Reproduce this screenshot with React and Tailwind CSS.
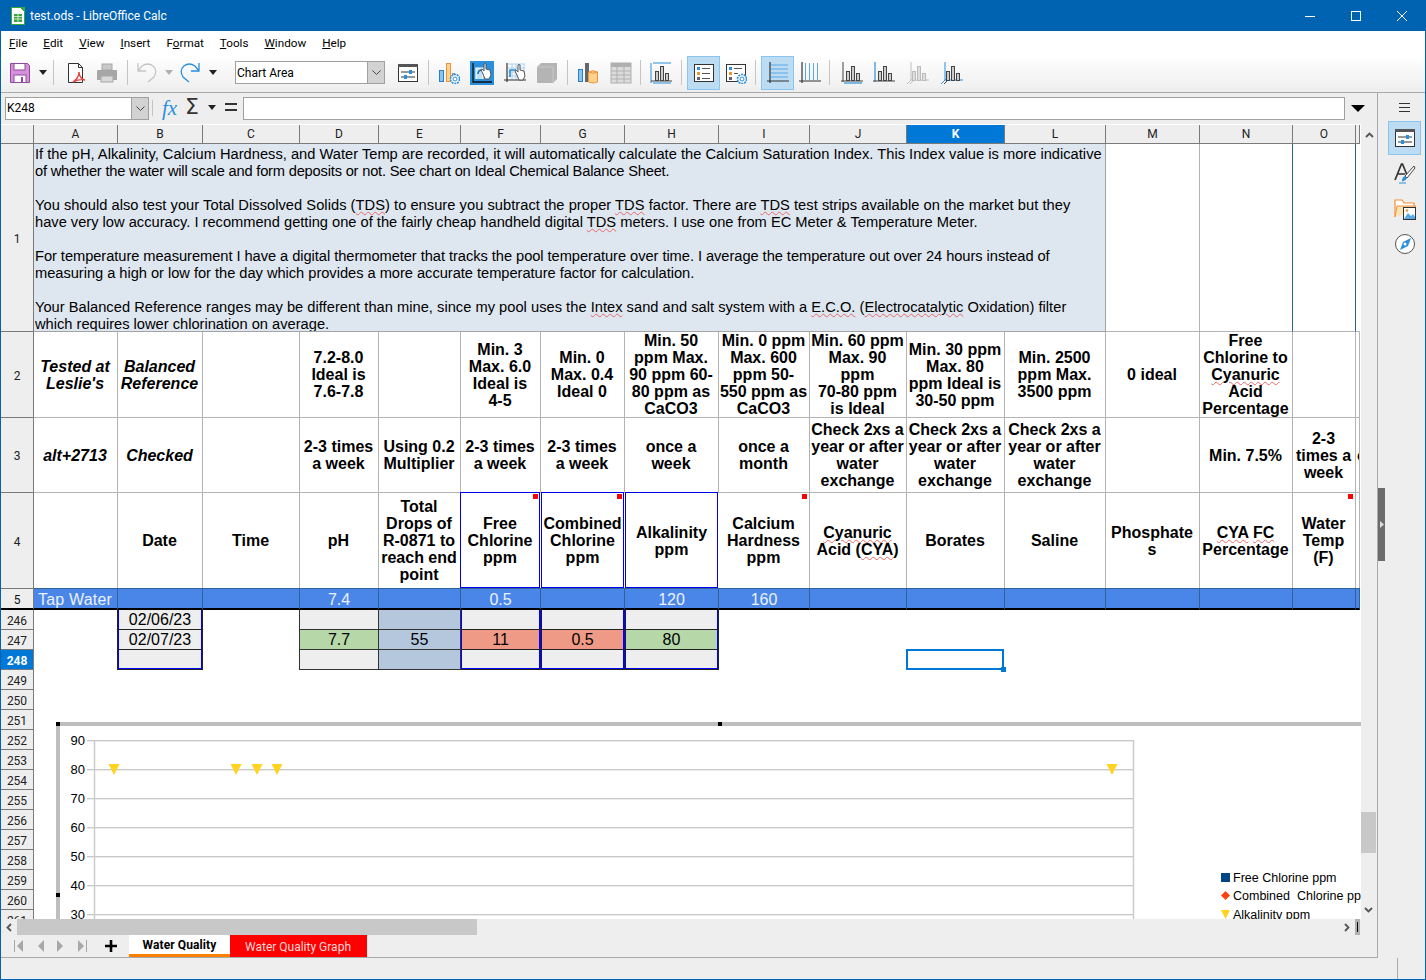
import * as React from "react";

// --- toolbar icons, all on a 22 box ---
const Ico = ({ children, w = 22, h = 22, className = "" }) => (
    <svg width={w} height={h} viewBox={`0 0 ${w} ${h}`} className={`shrink-0 ${className}`} fill="none">
        {children}
    </svg>
);

const Sep = ({ className = "", h = "h-[25px]" }) => <div className={`w-px ${h} bg-[#c4c4c4] shrink-0 ${className}`} />;

const Caret = ({ className = "", color = "#222" }) => (
    <svg width="10" height="6" viewBox="0 0 10 6" className={`shrink-0 ${className}`}>
        <path d="M1 0h8L5 5z" fill={color} />
    </svg>
);

const SaveIcon = () => (
    <Ico>
        <path d="M1.5 1.5h17l2 2v17h-19z" fill="#d691d8" stroke="#8e4aa3" />
        <rect x="5" y="1.5" width="11" height="6.5" fill="#fff" stroke="#8e4aa3" />
        <rect x="5" y="13" width="12" height="7.5" fill="#fff" stroke="#8e4aa3" />
        <rect x="12" y="15" width="2" height="5" fill="#8e4aa3" />
    </Ico>
);

const PdfIcon = () => (
    <Ico>
        <path d="M3.5 1.5h10l4 4v15h-14z" fill="#fff" stroke="#333" />
        <path d="M13.5 1.5v4h4" stroke="#333" />
        <path d="M14 10c0 4-3 8-6 10 4-2 8-3 12-2-3 0-6-4-6-8z" stroke="#e2433f" strokeWidth="1.4" fill="#fff" />
    </Ico>
);

const PrintIcon = () => (
    <Ico>
        <rect x="6" y="2" width="10" height="6" fill="#c8c8c8" stroke="#a8a8a8" />
        <path d="M1 9q0-1 1-1h18q1 0 1 1v9H1z" fill="#a6a6a6" />
        <rect x="5" y="14" width="12" height="6" fill="#d8d8d8" stroke="#a8a8a8" />
    </Ico>
);

const UndoIcon = () => (
    <Ico>
        <path d="M2 1v8h8M2 9l4-5q6-4 11 0t1 11l-6 5" stroke="#c4c4c4" strokeWidth="1.3" />
    </Ico>
);

const RedoIcon = () => (
    <Ico>
        <path d="M19 1v8h-8M19 9l-4-5Q9 0 4 4T3 15l6 5" stroke="#2a8fdc" strokeWidth="1.3" />
    </Ico>
);

const PropsIcon = () => (
    <Ico>
        <rect x="1.5" y="2.5" width="19" height="17" fill="#fff" stroke="#333" />
        <rect x="1" y="2" width="20" height="3" fill="#555" />
        <path d="M4 10h14M4 15h14" stroke="#333" />
        <rect x="12" y="8" width="3" height="4" fill="#2a8fdc" />
        <rect x="7" y="13" width="3" height="4" fill="#2a8fdc" />
    </Ico>
);

const Gear = ({ x, y }) => (
    <g>
        <circle cx={x} cy={y} r="4.5" stroke="#2a8fdc" strokeWidth="1.6" strokeDasharray="2 .8" fill="#fff" />
        <circle cx={x} cy={y} r="2" stroke="#2a8fdc" />
    </g>
);

const BarsGearIcon = () => (
    <Ico>
        <rect x="1.5" y="8.5" width="4" height="11" fill="#8cc4f0" stroke="#2a7fc8" />
        <rect x="8.5" y="1.5" width="4" height="18" fill="#fbd38d" stroke="#f0923a" />
        <path d="M14 12h3" stroke="#333" />
        <Gear x={17} y={17} />
    </Ico>
);

const HandBadge = () => (
    <path d="M13 13l-2-4q0-1 1-1l2 2V3q1-1 2 0v5l4 1 1 5-2 4h-4z" fill="#fff" stroke="#555" />
);

const TitleHandIcon = () => (
    <div className="w-[24px] h-[24px] bg-[#2a8fdc] shrink-0">
        <Ico w={24} h={24}>
            <path d="M3 2v19h19" stroke="#111" strokeWidth="1.3" />
            <path d="M6 18V7h7v11" fill="#bfe0f8" stroke="#fff" strokeWidth="1.200" />
            <path d="M8 13q0-4 4-4" stroke="#1b6fb5" strokeWidth="1.600" />
            <HandBadge />
        </Ico>
    </div>
);

const GridHandIcon = () => (
    <Ico>
        <path d="M4 2h17M4 6h17M4 10h17M4 14h17M8 2v16M12 2v16M16 2v16M20 2v16" stroke="#a8d3f4" />
        <path d="M3 1v19M0 18h22" stroke="#333" strokeWidth="1.2" />
        <path d="M6 15V8h6" stroke="#2a8fdc" strokeWidth="1.6" />
        <HandBadge />
    </Ico>
);

const CubeIcon = () => (
    <Ico>
        <path d="M1 21V5l4-4h16v16l-4 4z" fill="#b4b4b4" />
        <path d="M1 5h16v16" stroke="#c8c8c8" />
    </Ico>
);

const DbIcon = () => (
    <Ico>
        <rect x="1.5" y="7.5" width="4" height="12" fill="#8cc4f0" stroke="#2a7fc8" />
        <rect x="8" y="1" width="4" height="19" fill="#666" />
        <path d="M11.5 10q4.5-2.500 9 0v10q-4.500 2-9 0z" fill="#fbd38d" stroke="#f0923a" />
        <path d="M11.500 10q4.500 2.500 9 0" stroke="#f0923a" />
    </Ico>
);

const TableIcon = () => (
    <Ico>
        <rect x="1" y="1" width="20" height="20" fill="#dcdcdc" />
        <rect x="1" y="1" width="20" height="4" fill="#b0b0b0" />
        <path d="M1 9h20M1 13h20M1 17h20M7 1v20M14 1v20" stroke="#b0b0b0" />
        <rect x="1" y="1" width="20" height="20" stroke="#b0b0b0" />
    </Ico>
);

const Bars = ({ c = "#444", f = "#ccc" }) => (
    <g stroke={c} fill={f}>
        <rect x="5.500" y="9.500" width="3" height="9" />
        <rect x="10.500" y="4.500" width="3" height="14" />
        <rect x="15.500" y="11.500" width="3" height="7" />
    </g>
);

const ChartTitleIcon = () => (
    <Ico>
        <path d="M1 1v20" stroke="#2a8fdc" />
        <path d="M3 1h18M3 21h18" stroke="#2a8fdc" />
        <path d="M1 19h21" stroke="#444" />
        <Bars />
    </Ico>
);

const LegendIcon = () => (
    <Ico>
        <rect x="1.500" y="2.500" width="19" height="17" fill="#fff" stroke="#333" />
        <rect x="4" y="5" width="3" height="3" fill="#2a8fdc" />
        <rect x="4" y="10" width="3" height="3" fill="#f0923a" />
        <rect x="4" y="15" width="3" height="3" fill="#666" />
        <path d="M9 6.500h8M9 11.500h8M9 16.500h8" stroke="#555" />
    </Ico>
);

const LegendGearIcon = () => (
    <Ico>
        <rect x="1.500" y="2.500" width="19" height="17" fill="#fff" stroke="#333" />
        <rect x="4" y="5" width="3" height="3" fill="#2a8fdc" />
        <rect x="4" y="10" width="3" height="3" fill="#f0923a" />
        <rect x="4" y="15" width="3" height="3" fill="#666" />
        <path d="M9 6.500h8M9 11.500h4" stroke="#555" />
        <Gear x={17} y={17} />
    </Ico>
);

const HGridIcon = () => (
    <Ico>
        <path d="M4 3h17M4 7h17M4 11h17M4 15h17" stroke="#5aa9e6" />
        <path d="M3 0v21M0 19h22" stroke="#333" strokeWidth="1.2" />
    </Ico>
);

const VGridIcon = () => (
    <Ico>
        <path d="M6.500 1v17M10.500 1v17M14.500 1v17M18.500 1v17" stroke="#5aa9e6" />
        <path d="M3 0v21M0 19h22" stroke="#333" strokeWidth="1.2" />
    </Ico>
);

const AxisXIcon = () => (
    <Ico>
        <path d="M2 0v20M0 19h22" stroke="#444" />
        <path d="M3 21h18" stroke="#2a8fdc" strokeWidth="1.2" />
        <Bars />
    </Ico>
);

const AxisYIcon = () => (
    <Ico>
        <path d="M2 0v20" stroke="#2a8fdc" strokeWidth="1.2" />
        <path d="M0 19h22" stroke="#444" />
        <Bars />
    </Ico>
);

const AxisZIcon = () => (
    <Ico>
        <path d="M4 0v18M4 18h18" stroke="#c0c0c0" />
        <path d="M0 22l6-6M3 22l6-6" stroke="#c0c0c0" />
        <Bars c="#bcbcbc" f="#dedede" />
    </Ico>
);

const AxisAllIcon = () => (
    <Ico>
        <path d="M4 0v18" stroke="#2a8fdc" />
        <path d="M4 18h18" stroke="#2a8fdc" />
        <path d="M0 22l6-6" stroke="#2a8fdc" />
        <path d="M3 22l6-6" stroke="#444" />
        <Bars />
    </Ico>
);

const StylesIcon = () => (
    <Ico>
        <path d="M1 17L7.500 1h1L13 12M4 11h7" stroke="#333" strokeWidth="1.7" />
        <path d="M20 3L11 13l2 2L21 5z" fill="#fff" stroke="#444" />
        <path d="M11 13q-3 1-3 5 3 1 5-3z" fill="#2a8fdc" />
        <path d="M5 20h7" stroke="#2a8fdc" />
    </Ico>
);

const GalleryIcon = () => (
    <Ico>
        <path d="M1 19V2h7l2 3h10v3" fill="#fff" stroke="#f0923a" strokeWidth="1.2" />
        <path d="M1 19l2-11h19l-1 4" fill="#fbe3b4" stroke="#f0923a" />
        <rect x="9.500" y="9.500" width="12" height="12" fill="#fff" stroke="#333" />
        <path d="M10 21l4-6 3 3 2-2 2 3v2z" fill="#5aa9e6" />
        <circle cx="13" cy="12.500" r="1.300" fill="#f0923a" />
    </Ico>
);

const NavigatorIcon = () => (
    <Ico>
        <circle cx="11" cy="11" r="9.500" fill="#fff" stroke="#555" />
        <path d="M17 5l-3 8-8 4 3-8z" fill="#2a8fdc" />
        <circle cx="11" cy="11" r="1.500" fill="#fff" />
    </Ico>
);

const Combo = ({ text, className = "" }) => (
    <div className={`flex border border-[#a0a0a0] bg-white shrink-0 ${className}`}>
        <div className="flex-1 flex items-center pl-[1px] text-[12px] text-black">{text}</div>
        <div className="w-[17px] bg-[#d2d2d2] border-l border-[#a0a0a0] flex items-center justify-center">
            <svg width="9" height="5" viewBox="0 0 9 5" fill="none">
                <path d="M.5.500l4 4 4-4" stroke="#444" />
            </svg>
        </div>
    </div>
);

// --- sheet data ---
const COLUMNS = ["A", "B", "C", "D", "E", "F", "G", "H", "I", "J", "K", "L", "M", "N", "O", "P"];

const INTRO = [
    ["If the pH, Alkalinity, Calcium Hardness, and Water Temp are recorded, it will automatically calculate the Calcium Saturation Index. This Index value is more indicative", "tracking-[0.01px]"],
    ["of whether the water will scale and form deposits or not. See chart on Ideal Chemical Balance Sheet.", "tracking-[-0.19px]"],
    ["", ""],
    ["You should also test your Total Dissolved Solids (~TDS~) to ensure you subtract the proper ~TDS~ factor. There are ~TDS~ test strips available on the market but they", "tracking-[0.04px]"],
    ["have very low accuracy. I recommend getting one of the fairly cheap handheld digital ~TDS~ meters. I use one from EC Meter & Temperature Meter.", ""],
    ["", ""],
    ["For temperature measurement I have a digital thermometer that tracks the pool temperature over time. I average the temperature out over 24 hours instead of", "tracking-[-0.05px]"],
    ["measuring a high or low for the day which provides a more accurate temperature factor for calculation.", "tracking-[-0.03px]"],
    ["", ""],
    ["Your Balanced Reference ranges may be different than mine, since my pool uses the ~Intex~ sand and salt system with a ~E.C.O.~ (~Electrocatalytic~ Oxidation) filter", "tracking-[0.02px]"],
    ["which requires lower chlorination on average.", ""],
];

const ROW2 = [
    "Tested at\nLeslie's", "Balanced\nReference", "", "7.2-8.0\nIdeal is\n7.6-7.8", "",
    "Min. 3\nMax. 6.0\nIdeal is\n4-5", "Min. 0\nMax. 0.4\nIdeal 0", "Min. 50\nppm Max.\n90 ppm 60-\n80 ppm as\nCaCO3",
    "Min. 0 ppm\nMax. 600\nppm 50-\n550 ppm as\nCaCO3", "Min. 60 ppm\nMax. 90\nppm\n70-80 ppm\nis Ideal",
    "Min. 30 ppm\nMax. 80\nppm Ideal is\n30-50 ppm", "Min. 2500\nppm Max.\n3500 ppm", "0 ideal",
    "Free\nChlorine to\n~Cyanuric~\nAcid\nPercentage", "", "",
];

const CHECK = "Check 2xs a\nyear or after\nwater\nexchange";
const ROW3 = [
    "alt+2713", "Checked", "", "2-3 times\na week", "Using 0.2\nMultiplier", "2-3 times\na week", "2-3 times\na week",
    "once a\nweek", "once a\nmonth", CHECK, CHECK, CHECK, "", "Min. 7.5%", "2-3\ntimes a\nweek", "once",
];

const ROW4 = [
    "", "Date", "Time", "pH", "Total\nDrops of\nR-0871 to\nreach end\npoint", "Free\nChlorine\nppm", "Combined\nChlorine\nppm",
    "Alkalinity\nppm", "Calcium\nHardness\nppm", "~Cyanuric~\nAcid (~CYA~)", "Borates", "Saline", "Phosphate\ns",
    "~CYA~ ~FC~\nPercentage", "Water\nTemp\n(F)", "",
];

const ROW5 = ["Tap Water", "", "", "7.4", "", "0.5", "", "120", "160", "", "", "", "", "", "", ""];

// ~word~ gets the red spell check line
const withSpell = (text) =>
    text.split("~").map((part, i) =>
        i % 2 ? (
            <span key={i} className="underline decoration-wavy decoration-[#e86a6a] decoration-1 underline-offset-[1px]">
                {part}
            </span>
        ) : (
            part
        )
    );

const RowHead = ({ n, active }) => (
    <div
        className={`flex items-center justify-center pt-[2px] border-b border-r border-[#7a7a7a] text-[12px] font-['Roboto',sans-serif] ${
            active ? "bg-[#0078d7] text-white font-bold" : "bg-[#eeeeee] text-[#222]"
        }`}
    >
        {n}
    </div>
);

const HeadCell = ({ text, className = "" }) => (
    <div
        className={`flex items-center justify-center text-center whitespace-pre-line overflow-hidden text-[16px] leading-[17px] font-bold text-black ${className}`}
    >
        <div>{withSpell(text)}</div>
    </div>
);

const PLAIN = "border-r border-b border-[#b4b4b4] pr-px";
// the three boxed header cells of the selected columns
const PICKED = {
    5: "border border-[#0000ee] -ml-px -mt-px mr-px mb-px pt-px",
    6: "border border-[#0000ee] -mt-px mr-px mb-px pt-px",
    7: "border border-[#0000ee] -mt-px mr-px mb-px pt-px",
};

const GRAY = "bg-[#eeeeee]";
const BLUE = "bg-[#b4c7dc]";
const GREEN = "bg-[#b6d7a8]";
const RED = "bg-[#ee9a86]";
const RANGE = "border-r border-b border-[#222] shadow-[inset_1px_0_0_#0000ff,inset_-1px_0_0_#0000ff]";
const RANGE_END = "border-r border-b border-[#222] shadow-[inset_1px_0_0_#0000ff,inset_-1px_0_0_#0000ff,inset_0_-1px_0_#0000ff]";
const LEFT_EDGE = "-ml-px border-l";
const SOLO = "-ml-px border-l border-r border-b border-[#333]";

const DataCell = ({ text = "", className = "" }) => (
    <div className={`flex items-center justify-center text-[16px] text-black ${className}`}>{text}</div>
);

const Empty = () => <div />;

const TableRows = () => (
    <>
        <RowHead n={246} />
        <Empty />
        <DataCell text="02/06/23" className={`${GRAY} ${RANGE} ${LEFT_EDGE}`} />
        <Empty />
        <DataCell className={`${GRAY} ${SOLO}`} />
        <DataCell className={`${BLUE} ${SOLO}`} />
        <DataCell className={`${GRAY} ${RANGE}`} />
        <DataCell className={`${GRAY} ${RANGE}`} />
        <DataCell className={`${GRAY} ${RANGE}`} />
        {Array.from({ length: 8 }).map((_, i) => <Empty key={i} />)}

        <RowHead n={247} />
        <Empty />
        <DataCell text="02/07/23" className={`${GRAY} ${RANGE} ${LEFT_EDGE}`} />
        <Empty />
        <DataCell text="7.7" className={`${GREEN} ${SOLO}`} />
        <DataCell text="55" className={`${BLUE} ${SOLO}`} />
        <DataCell text="11" className={`${RED} ${RANGE}`} />
        <DataCell text="0.5" className={`${RED} ${RANGE}`} />
        <DataCell text="80" className={`${GREEN} ${RANGE}`} />
        {Array.from({ length: 8 }).map((_, i) => <Empty key={i} />)}

        <RowHead n={248} active />
        <Empty />
        <DataCell className={`${GRAY} ${RANGE_END} ${LEFT_EDGE}`} />
        <Empty />
        <DataCell className={`${GRAY} ${SOLO}`} />
        <DataCell className={`${BLUE} ${SOLO}`} />
        <DataCell className={`${GRAY} ${RANGE_END}`} />
        <DataCell className={`${GRAY} ${RANGE_END}`} />
        <DataCell className={`${GRAY} ${RANGE_END}`} />
        <Empty />
        <Empty />
        {/* cursor on K248 */}
        <div className="relative">
            <div className="absolute -left-px -top-px right-px bottom-0 border-2 border-[#0078d7]" />
            <div className="absolute right-[-1px] bottom-[-2px] w-[5px] h-[5px] bg-[#0078d7]" />
        </div>
        {Array.from({ length: 5 }).map((_, i) => <Empty key={i} />)}

        {Array.from({ length: 13 }).map((_, r) => (
            <React.Fragment key={r}>
                <RowHead n={249 + r} />
                {COLUMNS.map((c) => <Empty key={c} />)}
            </React.Fragment>
        ))}
    </>
);

const Tri = ({ x }) => <path d={`M${x - 5.500} 764h11l-5.500 11z`} fill="#ffd320" />;

const Chart = () => (
    <div className="absolute left-[55px] top-[598px] w-[1305px] h-[197px] border-l-4 border-t-4 border-[#bebebe] bg-white">
        <div className="absolute -left-[4px] -top-[4px] w-[4px] h-[4px] bg-black" />
        <div className="absolute left-[658px] -top-[4px] w-[4px] h-[4px] bg-black" />
        <div className="absolute -left-[4px] top-[167px] w-[4px] h-[4px] bg-black" />
        <svg width="1301" height="193" viewBox="60 726 1301 193" className="block">
            {[740, 769, 798, 827, 856, 885, 914].map((y) => (
                <g key={y}>
                    <path d={`M87 ${y + 1.500}H1133`} stroke="#ececec" />
                    <path d={`M87 ${y + 0.500}H1133`} stroke="#c8c8c8" />
                </g>
            ))}
            <path d="M94.500 740V919M1133.500 740V919" stroke="#cccccc" strokeWidth="1.500" />
            {[90, 80, 70, 60, 50, 40, 30].map((v, i) => (
                <text key={v} x="85" y={745 + i * 29} textAnchor="end" fontSize="13" fontFamily="Liberation Sans" fill="#000">
                    {v}
                </text>
            ))}
            <Tri x={114} />
            <Tri x={236} />
            <Tri x={257} />
            <Tri x={277} />
            <Tri x={1112} />
            <rect x="1221" y="873" width="9" height="9" fill="#004586" />
            <path d="M1225.500 891l4.500 4.500-4.500 4.500-4.500-4.500z" fill="#ff420e" />
            <path d="M1221 910h9l-4.500 9z" fill="#ffd320" />
            <g fontSize="12.500" fontFamily="Liberation Sans" fill="#000">
                <text x="1233" y="882">Free Chlorine ppm</text>
                <text x="1233" y="900" xmlSpace="preserve">Combined  Chlorine ppm</text>
                <text x="1233" y="919">Alkalinity ppm</text>
            </g>
        </svg>
    </div>
);

const Sheet = () => (
    <div className="relative w-[1360px] h-[795px] overflow-hidden bg-white font-['Liberation_Sans',Arial,sans-serif]">
        <div className="grid grid-cols-[33px_84px_85px_97px_79px_82px_80px_84px_94px_91px_97px_98px_101px_94px_93px_63px_4px] grid-rows-[20px_188px_86px_75px_96px_21px_repeat(16,20px)]">
            {/* column letters */}
            <div className="bg-[#eeeeee] border-b border-r border-[#7a7a7a] mt-px" />
            {COLUMNS.map((c) => (
                <div
                    key={c}
                    className={`mt-px flex items-center justify-center border-b border-r border-[#7a7a7a] text-[12px] font-['Roboto',sans-serif] ${
                        c === "K" ? "bg-[#0078d7] text-white font-bold" : "bg-[#eeeeee] text-[#222]"
                    }`}
                >
                    {c !== "P" && c}
                </div>
            ))}

            {/* row 1, merged A to L */}
            <RowHead n={1} />
            <div className="col-span-12 bg-[#dee6ef] border-r border-b border-[#a4a4a4] pl-[1px] pt-[2px] overflow-hidden text-[14.67px] leading-[17px] text-black">
                {INTRO.map(([line, track], i) => (
                    <div key={i} className={`h-[17px] whitespace-nowrap ${track}`}>
                        {withSpell(line)}
                    </div>
                ))}
            </div>
            <div className="border-r border-b border-[#b4b4b4]" />
            <div className="border-r border-b border-r-[#2a6099] border-b-[#b4b4b4]" />
            <div className="border-r border-b border-r-[#2a6099] border-b-[#b4b4b4]" />
            <div className="border-b border-[#b4b4b4]" />

            {/* row 2 */}
            <RowHead n={2} />
            {ROW2.map((t, i) => (
                <HeadCell key={i} text={t} className={`${PLAIN} ${i < 2 ? "italic" : ""}`} />
            ))}

            {/* row 3 */}
            <RowHead n={3} />
            {ROW3.map((t, i) => (
                <HeadCell
                    key={i}
                    text={t}
                    className={`${PLAIN} ${i < 2 ? "italic" : ""} ${i === 15 ? "!justify-start pl-px" : ""}`}
                />
            ))}

            {/* row 4, the last fixed row */}
            <RowHead n={4} />
            {ROW4.map((t, i) => (
                <HeadCell key={i} text={t} className={PICKED[i] || PLAIN} />
            ))}

            {/* row 5 with the freeze line under it */}
            <div className="flex items-center justify-center pt-[2px] bg-[#eeeeee] border-r border-b-2 border-r-[#7a7a7a] border-b-black text-[12px] font-['Roboto',sans-serif]">
                5
            </div>
            {ROW5.map((t, i) => (
                <div
                    key={i}
                    className={`-mt-px flex items-center pt-[3px] border-r border-t border-b-2 border-r-[#2f6299] border-t-[#2f6299] border-b-black bg-[#4a86e8] text-[16px] text-[#eaf1fd] ${
                        i === 0 ? "pl-[4px] tracking-[0.2px]" : "justify-center"
                    }`}
                >
                    {t}
                </div>
            ))}

            <TableRows />
        </div>
        {/* comment marks */}
        <div className="absolute left-[532px] top-[370px] w-[5px] h-[5px] bg-[#ff0000]" />
        <div className="absolute left-[616px] top-[370px] w-[5px] h-[5px] bg-[#ff0000]" />
        <div className="absolute left-[801px] top-[370px] w-[5px] h-[5px] bg-[#ff0000]" />
        <div className="absolute left-[1347px] top-[370px] w-[5px] h-[5px] bg-[#ff0000]" />
        <Chart />
    </div>
);

const VScroll = () => (
    <div className="w-[16px] bg-[#eeeeee] relative">
        <div className="flex justify-center pt-[8px]">
            <svg width="9" height="6" viewBox="0 0 9 6" fill="none">
                <path d="M1 5l3.500-3.500L8 5" stroke="#555" strokeWidth="1.800" />
            </svg>
        </div>
        <div className="absolute left-0 top-[688px] w-[15px] h-[41px] bg-[#c8c8c8]" />
        <div className="absolute left-[3px] bottom-[6px]">
            <svg width="9" height="6" viewBox="0 0 9 6" fill="none">
                <path d="M1 1l3.500 3.500L8 1" stroke="#555" strokeWidth="1.800" />
            </svg>
        </div>
    </div>
);

// first, previous, next, last sheet buttons
const NavTri = ({ toLeft, bar }) => (
    <svg width="10" height="12" viewBox="0 0 10 12" className="shrink-0">
        {bar && toLeft && <path d="M.500 0v12" stroke="#a8a8a8" />}
        {bar && !toLeft && <path d="M9.500 0v12" stroke="#a8a8a8" />}
        {toLeft ? <path d="M9 0v12L3 6z" fill="#a8a8a8" /> : <path d="M1 0v12l6-6z" fill="#a8a8a8" />}
    </svg>
);

export default function App() {
    return (
        <div className="w-[1426px] h-[980px] flex flex-col overflow-hidden border border-[#0063b1] bg-[#eeeeee] font-['Roboto',sans-serif] text-[#111]">
            {/* title bar */}
            <div className="h-[30px] bg-[#0063b1] flex items-center shrink-0 text-white text-[12px]">
                <svg width="14" height="18" viewBox="0 0 14 18" className="ml-[10px] shrink-0">
                    <path d="M.500.500h9l4 4v13H.500z" fill="#fff" stroke="#3aa53a" />
                    <path d="M9 0h5v5z" fill="#3aa53a" />
                    <rect x="3" y="7" width="8" height="8" fill="#3aa53a" />
                    <path d="M3 9.500h8M3 12h8M7 7v8" stroke="#fff" strokeWidth=".7" />
                </svg>
                <span className="ml-[5px]">test.ods - LibreOffice Calc</span>
                <div className="ml-auto flex items-center">
                    <div className="w-[10px] h-px bg-white mr-[36px]" />
                    <div className="w-[10px] h-[10px] border border-white mr-[36px]" />
                    <svg width="10" height="10" viewBox="0 0 10 10" className="mr-[18px]">
                        <path d="M0 0l10 10M10 0L0 10" stroke="#fff" />
                    </svg>
                </div>
            </div>

            {/* menu */}
            <div className="h-[24px] bg-white flex items-center gap-4 pl-[8px] pt-px shrink-0 text-[11.7px] text-black">
                {[
                    ["", "F", "ile"],
                    ["", "E", "dit"],
                    ["", "V", "iew"],
                    ["", "I", "nsert"],
                    ["F", "o", "rmat"],
                    ["", "T", "ools"],
                    ["", "W", "indow"],
                    ["", "H", "elp"],
                ].map(([a, b, c]) => (
                    <span key={b + c}>
                        {a}
                        <span className="underline">{b}</span>
                        {c}
                    </span>
                ))}
            </div>

            {/* standard toolbar */}
            <div className="h-[38px] bg-gradient-to-b from-white to-[#eeeeee] border-b border-[#aaaaaa] flex items-center pl-[8px] pb-[2px] shrink-0">
                <SaveIcon />
                <Caret className="ml-[7px]" />
                <Sep className="ml-[5px]" />
                <div className="ml-[11px]"><PdfIcon /></div>
                <div className="ml-[9px]"><PrintIcon /></div>
                <Sep className="ml-[9px]" />
                <div className="ml-[8px]"><UndoIcon /></div>
                <Caret className="ml-[6px]" color="#b0b0b0" />
                <div className="ml-[6px]"><RedoIcon /></div>
                <Caret className="ml-[6px]" />
                <Combo text="Chart Area" className="ml-[17px] w-[150px] h-[23px]" />
                <div className="ml-[12px]"><PropsIcon /></div>
                <Sep className="ml-[9px]" />
                <div className="ml-[9px]"><BarsGearIcon /></div>
                <div className="ml-[10px]"><TitleHandIcon /></div>
                <div className="ml-[10px]"><GridHandIcon /></div>
                <div className="ml-[10px]"><CubeIcon /></div>
                <Sep className="ml-[9px]" />
                <div className="ml-[9px]"><DbIcon /></div>
                <div className="ml-[11px]"><TableIcon /></div>
                <Sep className="ml-[8px]" />
                <div className="ml-[9px]"><ChartTitleIcon /></div>
                <Sep className="ml-[9px]" />
                <div className="ml-[5px] w-[33px] h-[34px] bg-[#bcdcf4] border border-[#8cc4f0] flex items-center justify-center"><LegendIcon /></div>
                <div className="ml-[5px]"><LegendGearIcon /></div>
                <Sep className="ml-[8px]" />
                <div className="ml-[5px] w-[33px] h-[34px] bg-[#bcdcf4] border border-[#8cc4f0] flex items-center justify-center"><HGridIcon /></div>
                <div className="ml-[5px]"><VGridIcon /></div>
                <Sep className="ml-[8px]" />
                <div className="ml-[11px]"><AxisXIcon /></div>
                <div className="ml-[10px]"><AxisYIcon /></div>
                <div className="ml-[12px]"><AxisZIcon /></div>
                <div className="ml-[12px]"><AxisAllIcon /></div>
            </div>

            <div className="flex flex-1 min-h-0">
                <div className="w-[1376px] flex flex-col shrink-0">
                    {/* formula bar */}
                    <div className="h-[31px] flex items-center pl-[4px] pb-[1px] shrink-0">
                        <Combo text="K248" className="w-[144px] h-[23px]" />
                        <Sep className="ml-[3px]" h="h-[16px]" />
                        <span className="ml-[9px] w-[18px] font-['Liberation_Serif',serif] italic text-[21px] leading-none text-[#2a8fdc]">fx</span>
                        <span className="ml-[5px] w-[15px] font-['DejaVu_Sans',sans-serif] text-[22px] leading-none text-[#333] -mt-[2px]">Σ</span>
                        <Caret className="ml-[7px]" />
                        <svg width="12" height="8" viewBox="0 0 12 8" className="ml-[8px] -mt-[3px] shrink-0">
                            <path d="M0 1h12M0 7h12" stroke="#333" strokeWidth="2" />
                        </svg>
                        <div className="ml-[6px] w-[1102px] h-[23px] bg-white border border-[#a0a0a0]" />
                        <svg width="14" height="7" viewBox="0 0 14 7" className="ml-[6px] shrink-0">
                            <path d="M0 0h14L7 7z" fill="#000" />
                        </svg>
                    </div>

                    <div className="flex h-[795px] shrink-0">
                        <Sheet />
                        <VScroll />
                    </div>

                    {/* horizontal scroll */}
                    <div className="h-[16px] flex items-center shrink-0">
                        <div className="w-[16px] flex justify-center">
                            <svg width="6" height="9" viewBox="0 0 6 9" fill="none">
                                <path d="M5 1L1.500 4.500 5 8" stroke="#555" strokeWidth="1.800" />
                            </svg>
                        </div>
                        <div className="w-[460px] h-full bg-[#c8c8c8]" />
                        <div className="ml-[867px] flex">
                            <svg width="6" height="9" viewBox="0 0 6 9" fill="none">
                                <path d="M1 1l3.500 3.500L1 8" stroke="#555" strokeWidth="1.800" />
                            </svg>
                        </div>
                        <div className="ml-[5px] w-[5px] h-full bg-[#b0b0b0] flex justify-center">
                            <div className="w-px h-[10px] mt-[3px] bg-black" />
                        </div>
                    </div>

                    {/* sheet tabs */}
                    <div className="flex-1 flex items-stretch border-b border-[#aaaaaa] text-[12px]">
                        <div className="flex items-center pl-[13px] gap-[11px] w-[128px]">
                            <NavTri toLeft bar />
                            <NavTri toLeft />
                            <NavTri />
                            <NavTri bar />
                            <svg width="14" height="14" viewBox="0 0 14 14" className="ml-[6px]">
                                <path d="M7 1v12M1 7h12" stroke="#000" strokeWidth="2.600" />
                            </svg>
                        </div>
                        <div className="w-[101px] pt-px bg-white border-b-[3px] border-[#ff7f00] flex items-center justify-center font-bold text-black tracking-[0.1px]">
                            Water Quality
                        </div>
                        <div className="w-[137px] pt-px pr-px bg-[#ff0000] flex items-center justify-center text-[#ffd9d9]">
                            Water Quality Graph
                        </div>
                    </div>
                </div>

                {/* sidebar */}
                <div className="relative flex-1 border-l border-[#aaaaaa] flex flex-col items-center pt-[10px]">
                    <svg width="11" height="9" viewBox="0 0 11 9" className="ml-[6px]">
                        <path d="M0 .500h11M0 4.500h11M0 8.500h11" stroke="#333" />
                    </svg>
                    <div className="mt-[9px] ml-[6px] w-[33px] h-[34px] bg-[#bcdcf4] border border-[#8cc4f0] flex items-center justify-center">
                        <PropsIcon />
                    </div>
                    <div className="mt-[8px] ml-[6px]"><StylesIcon /></div>
                    <div className="mt-[13px] ml-[6px]"><GalleryIcon /></div>
                    <div className="mt-[13px] ml-[6px]"><NavigatorIcon /></div>
                    <div className="absolute left-0 top-[395px] w-[7px] h-[73px] bg-[#6b6b6b] flex items-center justify-center">
                        <svg width="4" height="7" viewBox="0 0 4 7"><path d="M0 0l4 3.500L0 7z" fill="#ddd" /></svg>
                    </div>
                </div>
            </div>

            {/* status bar */}
            <div className="h-[21px] shrink-0 flex">
                <div className="ml-auto mr-[27px] w-px bg-[#aaaaaa]" />
            </div>
        </div>
    );
}
